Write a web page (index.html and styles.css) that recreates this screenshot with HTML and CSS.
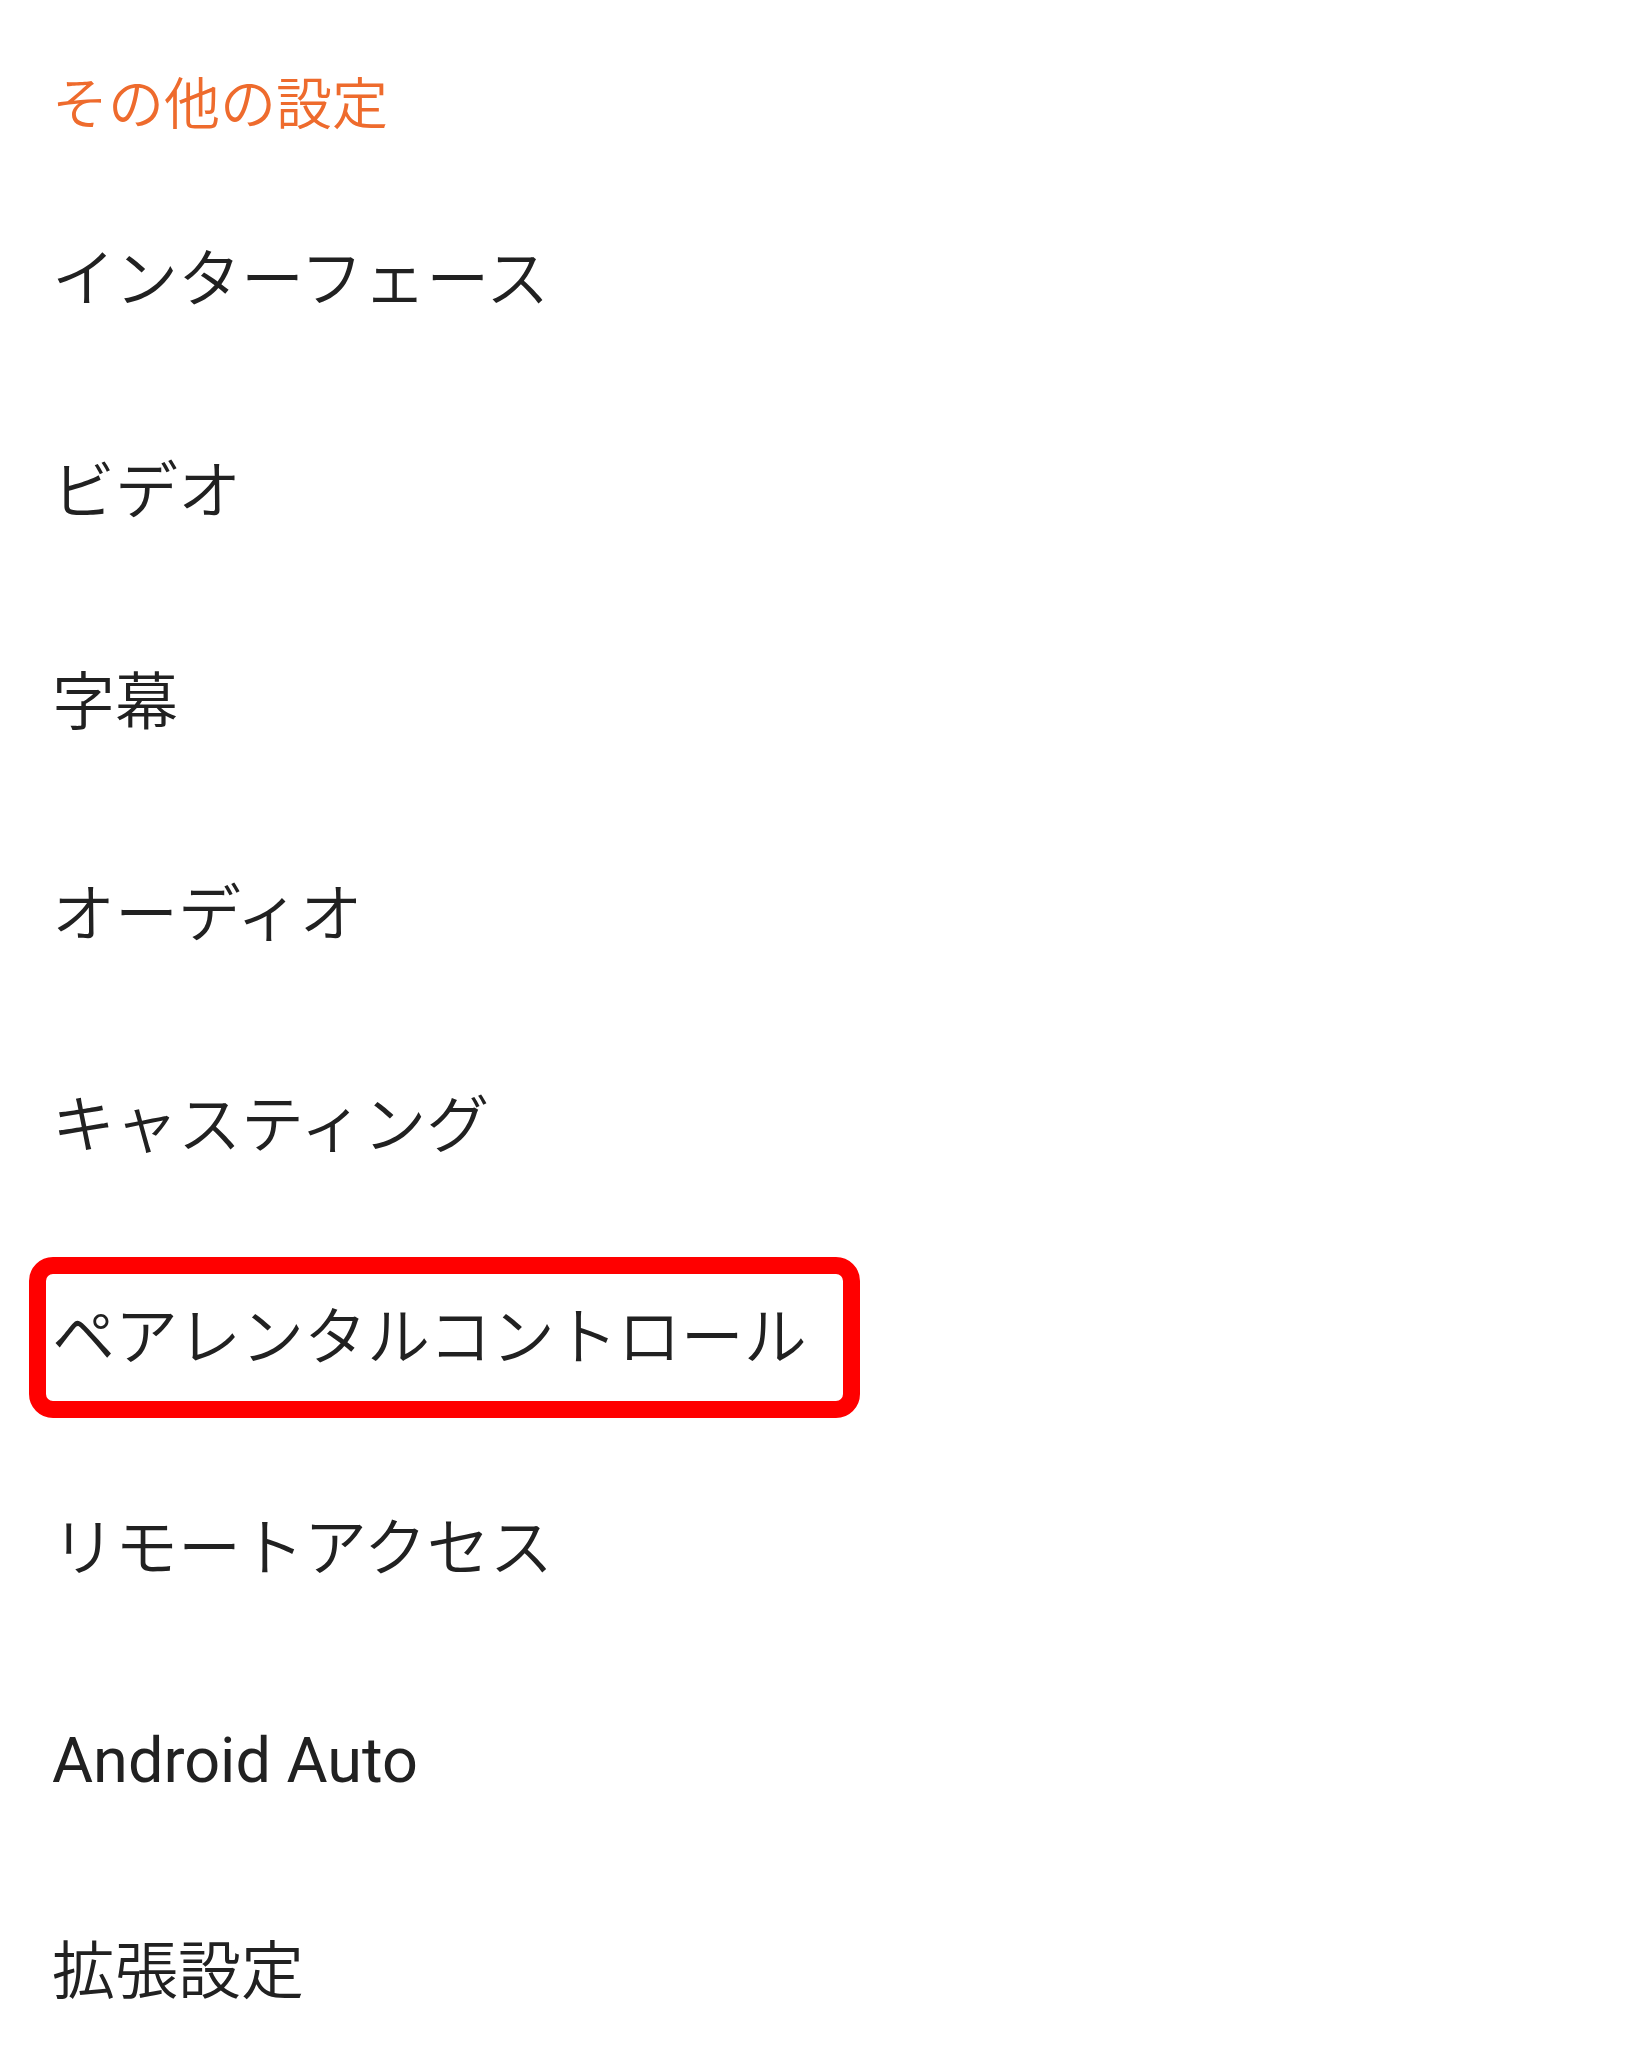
FILE: index.html
```html
<!DOCTYPE html>
<html lang="ja">
<head>
    <meta charset="UTF-8">
    <meta name="viewport" content="width=device-width, initial-scale=1.0">
    <title>その他の設定</title>
    <link rel="stylesheet" href="styles.css">
</head>
<body>
    <h2 class="section-title">その他の設定</h2>

    <ul class="settings-list">
        <li class="settings-item"><span>インターフェース</span></li>
        <li class="settings-item"><span>ビデオ</span></li>
        <li class="settings-item"><span>字幕</span></li>
        <li class="settings-item"><span>オーディオ</span></li>
        <li class="settings-item"><span>キャスティング</span></li>
        <!-- highlighted entry -->
        <li class="settings-item"><span class="highlight">ペアレンタルコントロール</span></li>
        <li class="settings-item"><span>リモートアクセス</span></li>
        <li class="settings-item"><span class="latin">Android Auto</span></li>
        <li class="settings-item"><span>拡張設定</span></li>
    </ul>
</body>
</html>
```

FILE: styles.css
```css
body {
    margin: 0;
    background-color: #ffffff;
    color: #212121;
    font-family: Roboto, "Noto Sans CJK JP", sans-serif;
    font-weight: 350;
}
.section-title {
    margin: 77px 0 0 0;
    padding-left: 52px;
    height: 56px;
    font-size: 56px;
    line-height: 56px;
    font-weight: 350;
    color: #ee6b2d;
}
.settings-list {
    list-style: none;
    margin: 41px 0 0 0;
    padding: 0 0 0 52px;
}
.settings-item {
    height: 211.5px;
    display: flex;
    align-items: center;
    font-size: 63px;
    line-height: 1;
}
.settings-item .latin {
    font-weight: 400;
}
.settings-item .highlight {
    margin-left: -23px;
    padding: 0 36px 0 6px;
    height: 127px;
    display: flex;
    align-items: center;
    border: 17px solid #ff0000;
    border-radius: 24px;
}
```
